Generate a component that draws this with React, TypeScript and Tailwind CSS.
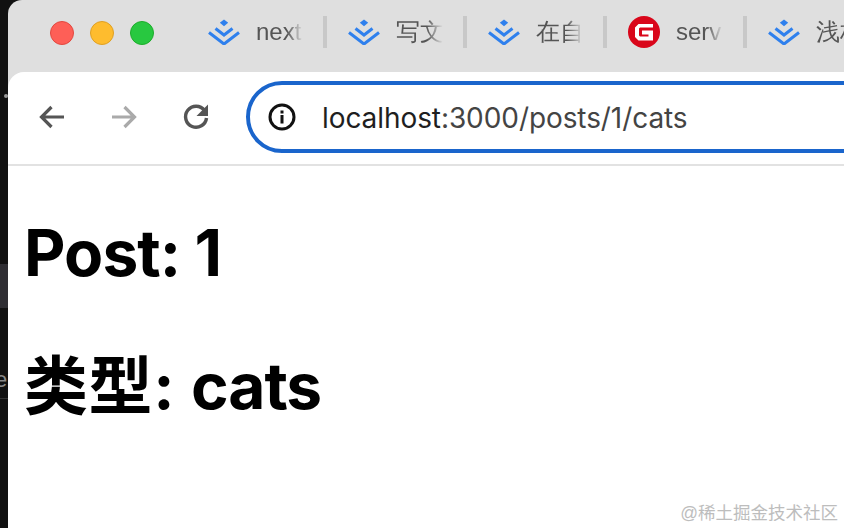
const JJ = () => (
  <svg width="32" height="26" viewBox="0 0 32 26" className="shrink-0">
    <path d="M16 0.5l4.2 3.3L16 7.2l-4.2-3.4z" fill="#2f80ed" />
    <path d="M7.5 9.5L16 16l8.5-6.5" fill="none" stroke="#2f80ed" strokeWidth="3" />
    <path d="M1 13.5L16 25l15-11.500" fill="none" stroke="#2f80ed" strokeWidth="3" />
  </svg>
);

const GIcon = () => (
  <svg width="32" height="32" viewBox="0 0 32 32" className="shrink-0">
    <circle cx="16" cy="16" r="16" fill="#d9061a" />
    <path d="M25 8H10.500L7 11.500V21l3.500 3.500H25V14.500H14v4h6.500v2H12l-1-1v-7l1-1h13z" fill="#fff" />
  </svg>
);

const tabs = [
  { t: "next", i: <JJ /> },
  { t: "写文", i: <JJ /> },
  { t: "在自", i: <JJ /> },
  { t: "serv", i: <GIcon /> },
  { t: "浅析", i: <JJ /> },
];

function Tab({ t, i, last }: { t: string; i: React.ReactNode; last: boolean }) {
  return (
    <div className="flex items-center shrink-0 w-[140px] h-[32px]">
      <div className="w-[32px] flex justify-center">{i}</div>
      <span className="ml-[16px] w-[47px] overflow-hidden whitespace-nowrap text-[24px] leading-[32px] text-[#555] [mask-image:linear-gradient(to_right,black_65%,transparent)]">
        {t}
      </span>
      <div className="flex-1" />
      {!last && <div className="w-[4px] h-[32px] mr-[21px] bg-[#c8c8c8]" />}
    </div>
  );
}

export default function App() {
  return (
    <div className="relative flex w-[844px] h-[528px] overflow-hidden bg-[#111111] font-['Liberation_Sans',sans-serif]">
      <div className="w-[8px] shrink-0 flex flex-col overflow-hidden bg-[#111111]">
        <div className="h-[94px] shrink-0" />
        <div className="w-[4px] h-[4px] ml-[4px] rounded-full bg-[#999] shrink-0" />
        <div className="h-[166px] shrink-0" />
        <div className="h-[44px] bg-[#2f2e33] shrink-0" />
        <div className="h-[60px] shrink-0" />
        <div className="text-[22px] leading-[24px] h-[24px] text-[#888] -ml-[5px] shrink-0">e</div>
        <div className="h-[6px] shrink-0" />
        <div className="h-px bg-[#333] shrink-0" />
      </div>
      <div className="flex-1 min-w-0 flex flex-col bg-[#dfdfdf] rounded-tl-[14px] overflow-hidden">
        <div className="h-[72px] shrink-0 flex items-center pl-[200px]">
          <div className="absolute left-[50px] top-[21px] flex gap-[16px]">
            <div className="w-[24px] h-[24px] rounded-full bg-[#fe5f57] border border-[#e2483f]" />
            <div className="w-[24px] h-[24px] rounded-full bg-[#febc2e] border border-[#dfa023]" />
            <div className="w-[24px] h-[24px] rounded-full bg-[#28c840] border border-[#1dad2b]" />
          </div>
          <div className="flex -mt-[8px]">
            {tabs.map((x, idx) => (
              <Tab key={idx} t={x.t} i={x.i} last={idx === tabs.length - 1} />
            ))}
          </div>
        </div>
        <div className="flex-1 bg-white rounded-tl-[16px] flex flex-col min-h-0">
          <div className="h-[94px] shrink-0 flex items-center border-b-2 border-[#e2e2e2] pb-[2px]">
            <svg width="26" height="24" viewBox="0 0 26 24" className="ml-[31px] shrink-0" fill="none" stroke="#555" strokeWidth="3.200">
              <path d="M25 12H3M12.500 2L2.500 12l10 10" />
            </svg>
            <svg width="26" height="24" viewBox="0 0 26 24" className="ml-[46px] shrink-0" fill="none" stroke="#aaa" strokeWidth="3.200">
              <path d="M1 12h22M13.500 2l10 10-10 10" />
            </svg>
            <svg width="28" height="28" viewBox="0 0 28 28" className="ml-[45px] shrink-0" fill="none">
              <path d="M22.500 7.500A10.500 10.500 0 1 0 24.500 15" stroke="#555" strokeWidth="3.400" />
              <path d="M26 1.500v11.500H14.500z" fill="#555" />
            </svg>
            <div className="ml-[36px] w-[720px] h-[72px] shrink-0 rounded-[36px] border-4 border-[#1a65cc] flex items-center">
              <svg width="28" height="28" viewBox="0 0 28 28" className="ml-[18px] shrink-0" fill="none">
                <circle cx="14" cy="14" r="12" stroke="#111" strokeWidth="3" />
                <rect x="12.500" y="12" width="3" height="8.500" fill="#111" />
                <rect x="12.500" y="7.500" width="3" height="3" fill="#111" />
              </svg>
              <span className="ml-[26px] mt-[2px] text-[28px] tracking-[-0.08px] font-['Inter',sans-serif] text-[#1f1f1f]">
                localhost<span className="text-[#444]">:3000/posts/1/cats</span>
              </span>
            </div>
          </div>
          <div className="pl-[16px] pt-[50px] text-black font-['Inter','Noto_Sans_CJK_SC',sans-serif]">
            <h1 className="text-[64px] leading-[74px] font-bold tracking-[-0.9px]">Post: 1</h1>
            <h1 className="mt-[59px] text-[64px] leading-[74px] font-bold tracking-[0.6px]">
              类型: <span className="tracking-[-1px]">cats</span>
            </h1>
          </div>
        </div>
      </div>
      <div className="absolute right-[6px] bottom-[3px] text-[17.5px] leading-[24px] text-[#bdbdbd] font-['Liberation_Sans','Noto_Sans_CJK_SC',sans-serif]">
        @稀土掘金技术社区
      </div>
    </div>
  );
}
